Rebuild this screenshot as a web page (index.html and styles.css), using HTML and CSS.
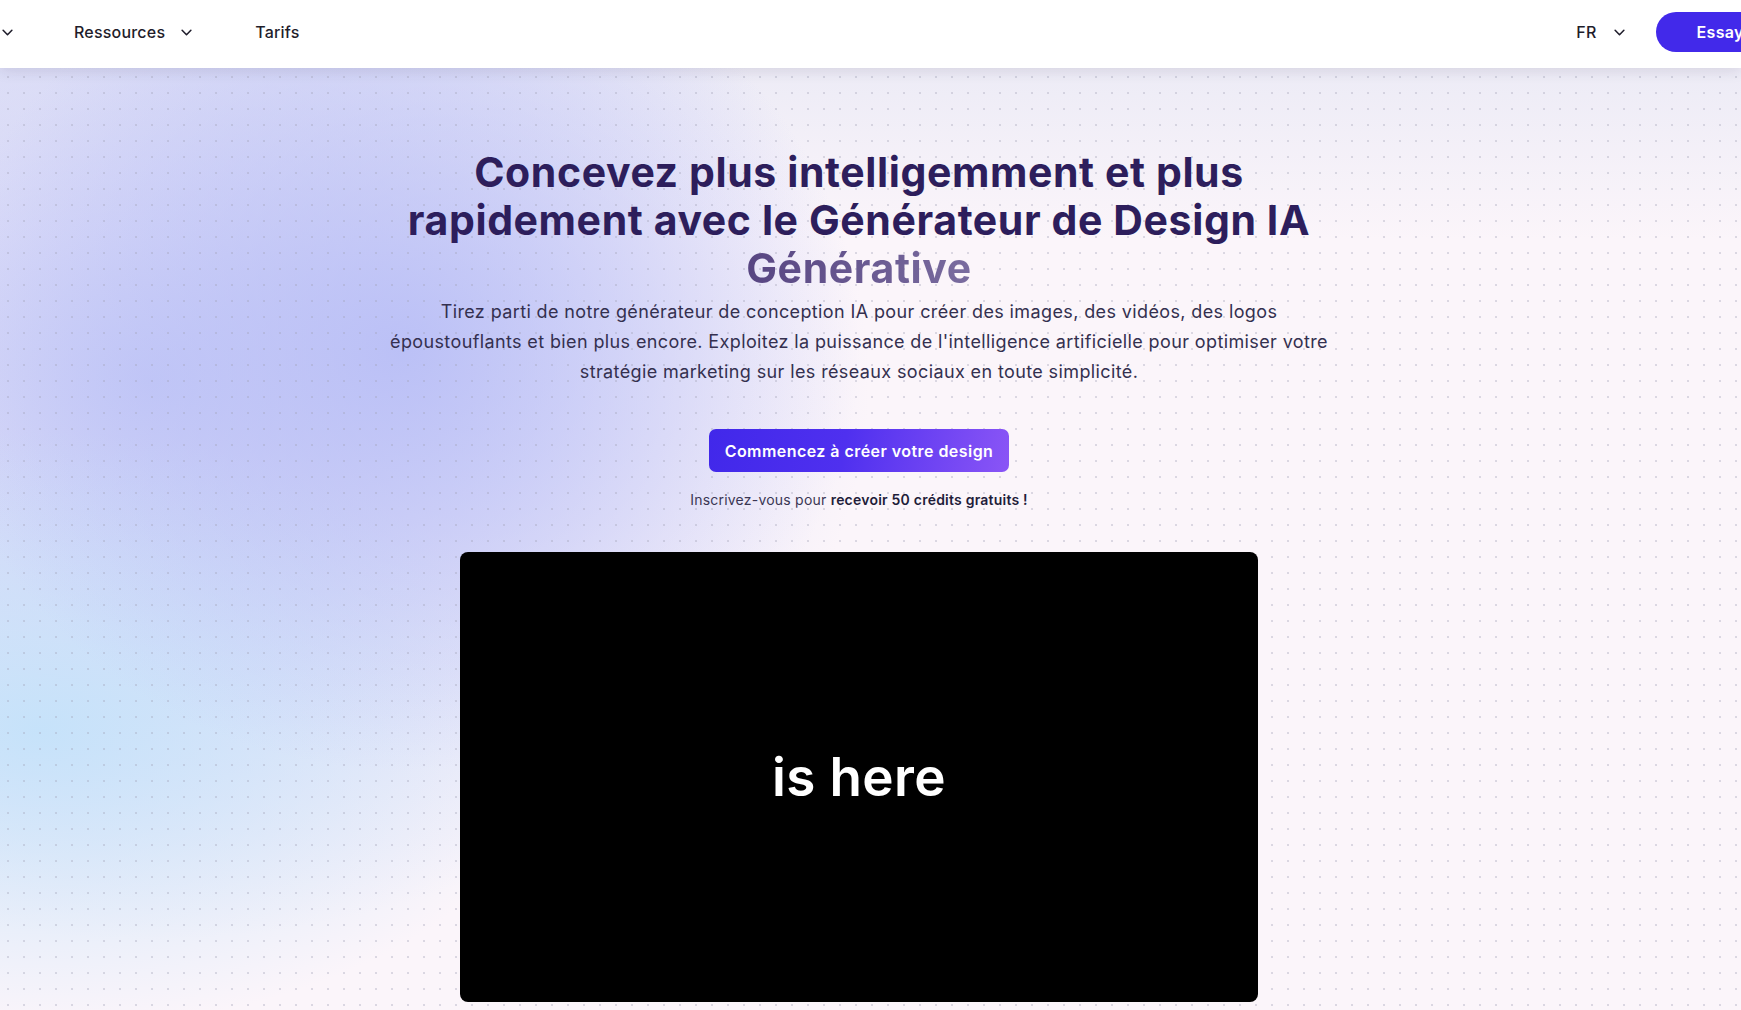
FILE: index.html
```html
<!DOCTYPE html>
<html lang="fr">
<head>
<meta charset="utf-8">
<title>Générateur de Design IA</title>
<link rel="stylesheet" href="styles.css">
</head>
<body>
<header class="nav">
  <div class="nav-left">
    <span class="nav-item"><svg class="chev" viewBox="0 0 12 8" width="11" height="7"><path d="M1 1.5l5 5 5-5" fill="none" stroke="#1f1d2b" stroke-width="1.8" stroke-linecap="round" stroke-linejoin="round"/></svg></span>
    <span class="nav-item nav-res">Ressources <svg class="chev" viewBox="0 0 12 8" width="11" height="7"><path d="M1 1.5l5 5 5-5" fill="none" stroke="#1f1d2b" stroke-width="1.8" stroke-linecap="round" stroke-linejoin="round"/></svg></span>
    <span class="nav-item nav-tarifs">Tarifs</span>
  </div>
  <div class="nav-right">
    <span class="nav-item lang">FR <svg class="chev" viewBox="0 0 12 8" width="11" height="7"><path d="M1 1.5l5 5 5-5" fill="none" stroke="#1f1d2b" stroke-width="1.8" stroke-linecap="round" stroke-linejoin="round"/></svg></span>
    <a class="try-btn">Essayer gratuitement</a>
  </div>
</header>
<main class="hero">
  <h1 class="title">Concevez plus intelligemment et plus<br>rapidement avec le Générateur de Design IA<br><span class="accent">Générative</span></h1>
  <p class="lead">Tirez parti de notre générateur de conception IA pour créer des images, des vidéos, des logos<br>époustouflants et bien plus encore. Exploitez la puissance de l'intelligence artificielle pour optimiser votre<br>stratégie marketing sur les réseaux sociaux en toute simplicité.</p>
  <a class="cta">Commencez à créer votre design</a>
  <p class="note">Inscrivez-vous pour <strong>recevoir 50 crédits gratuits !</strong></p>
  <div class="video"><span class="video-text">is here</span></div>
</main>
</body>
</html>
```
FILE: styles.css
```css
* { box-sizing: border-box; }
html, body { margin: 0; padding: 0; }
body {
  width: 1741px;
  height: 1010px;
  overflow: hidden;
  font-family: "Inter", "Open Sans", sans-serif;
  color: #1f1d2b;
  background-color: #fbf5fa;
  background-image:
    radial-gradient(circle at 8px 8px, rgba(160,160,180,0.35) 1px, transparent 1.2px),
    radial-gradient(ellipse 460px 420px at 400px 350px, rgba(182,188,246,0.85), rgba(182,188,246,0) 100%),
    radial-gradient(ellipse 520px 300px at 40px 730px, rgba(196,226,250,0.95), rgba(196,226,250,0) 100%),
    radial-gradient(ellipse 720px 560px at 150px 380px, rgba(192,198,246,0.9), rgba(192,198,246,0) 100%),
    linear-gradient(180deg, #ecebf6 60px, #fbf5fa 240px);
  background-size: 16px 16px, auto, auto, auto, auto;
  background-position: 0 5px, 0 0, 0 0, 0 0, 0 0;
  background-repeat: repeat, no-repeat, no-repeat, no-repeat, no-repeat;
}

.nav {
  height: 68px;
  padding-bottom: 4px;
  background: #fff;
  display: flex;
  align-items: center;
  justify-content: space-between;
  box-shadow: 0 2px 14px rgba(30, 20, 60, 0.12);
  position: relative;
  z-index: 2;
}
.nav-left, .nav-right {
  display: flex;
  align-items: center;
}
.nav-item {
  display: flex;
  align-items: center;
  font-size: 16px;
  font-weight: 500;
  color: #1f1d2b;
  letter-spacing: 0.2px;
}
.nav-left { padding-left: 2px; }
.nav-res { margin-left: 61px; }
.nav-res .chev { margin-left: 16px; }
.nav-tarifs { margin-left: 63px; }
.lang .chev { margin-left: 17px; }
.try-btn {
  margin-left: 31px;
  margin-right: -167px;
  height: 40px;
  padding: 0 41px;
  border-radius: 20px;
  background: #4229ea;
  color: #fff;
  font-weight: 600;
  font-size: 16px;
  letter-spacing: 0.3px;
  display: flex;
  align-items: center;
  white-space: nowrap;
}

.hero {
  display: flex;
  flex-direction: column;
  align-items: center;
  padding: 80px 23px 0 0;
  text-align: center;
}
.title {
  margin: 0;
  font-size: 41px;
  line-height: 48px;
  font-weight: 700;
  color: #2d1e5c;
  letter-spacing: 0.6px;
}
.accent {
  background: linear-gradient(90deg, #574582, #7a6c9f);
  -webkit-background-clip: text;
  background-clip: text;
  color: transparent;
}
.lead {
  margin: 5px 0 0;
  font-size: 18px;
  line-height: 30px;
  color: #34304f;
  font-weight: 400;
  letter-spacing: 0.38px;
}
.cta {
  margin-top: 42px;
  width: 300px;
  height: 43px;
  border-radius: 7px;
  background: linear-gradient(100deg, #4128ea 0%, #4f30ef 45%, #8a55f6 100%);
  color: #fff;
  font-size: 16px;
  font-weight: 600;
  letter-spacing: 0.45px;
  display: flex;
  align-items: center;
  justify-content: center;
}
.note {
  margin: 18px 0 0;
  font-size: 14px;
  line-height: 20px;
  color: #3a3654;
  letter-spacing: 0.22px;
}
.note strong {
  font-weight: 600;
  color: #1f1d3a;
}
.video {
  margin-top: 42px;
  width: 798px;
  height: 450px;
  border-radius: 8px;
  background: #000;
  display: flex;
  align-items: center;
  justify-content: center;
}
.video-text {
  color: #fff;
  font-size: 53px;
  font-weight: 600;
  letter-spacing: 0.4px;
}
```
